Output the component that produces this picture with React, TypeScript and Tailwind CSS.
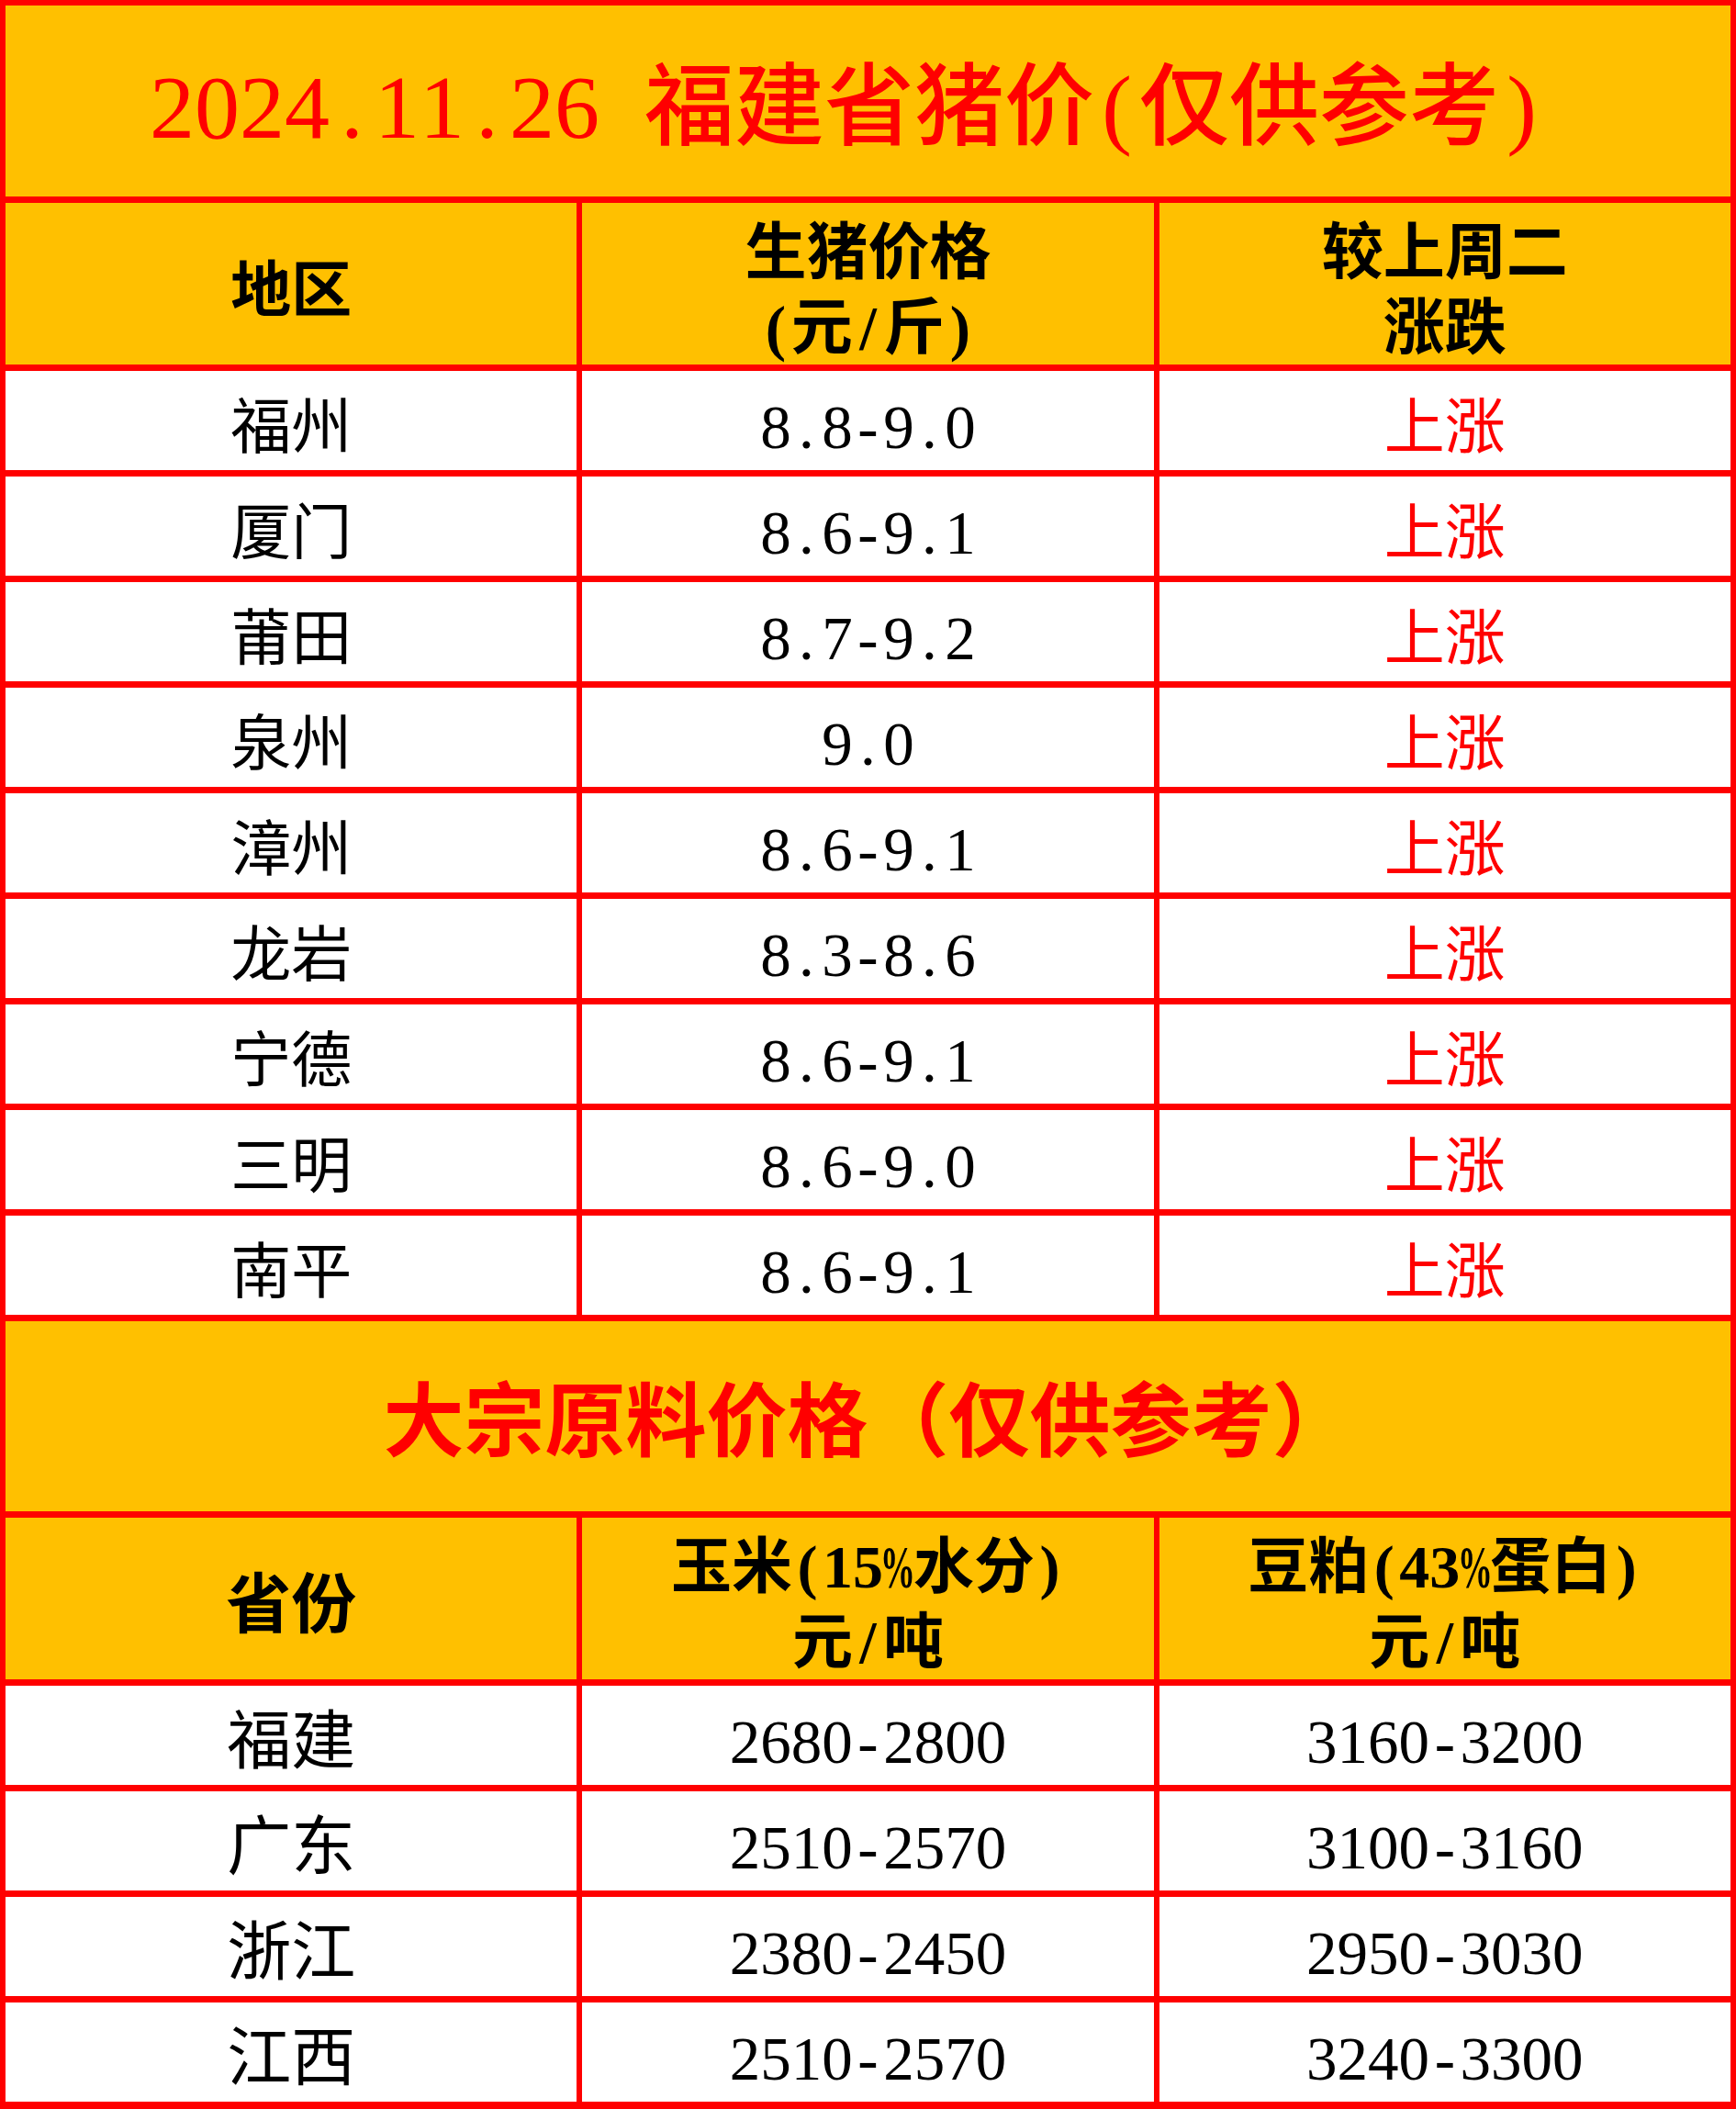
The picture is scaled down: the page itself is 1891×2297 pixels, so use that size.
const FONT = "font-['Liberation_Serif','Noto_Sans_CJK_SC',serif]";

const pigRows = [
  ["福州", "8.8-9.0"],
  ["厦门", "8.6-9.1"],
  ["莆田", "8.7-9.2"],
  ["泉州", "9.0"],
  ["漳州", "8.6-9.1"],
  ["龙岩", "8.3-8.6"],
  ["宁德", "8.6-9.1"],
  ["三明", "8.6-9.0"],
  ["南平", "8.6-9.1"],
];

const feedRows = [
  ["福建", "2680-2800", "3160-3200"],
  ["广东", "2510-2570", "3100-3160"],
  ["浙江", "2380-2450", "2950-3030"],
  ["江西", "2510-2570", "3240-3300"],
];

// half-width for ascii, full-width for CJK, like the sheet's SimSun
function Fixed({ text, latin = "" }: { text: string; latin?: string }) {
  return (
    <span className="whitespace-nowrap">
      {Array.from(text).map((ch, i) => {
        const ascii = ch.charCodeAt(0) < 128;
        if (ch === "%")
          return (
            <span key={i} className={`inline-flex justify-center w-[0.5em] ${latin}`}>
              <span className="inline-block shrink-0 scale-x-[0.58]">%</span>
            </span>
          );
        return (
          <span
            key={i}
            className={
              ascii
                ? `inline-block w-[0.5em] text-center ${latin}`
                : "inline-block w-[1em] text-center"
            }
          >
            {ch === " " ? "\u00a0" : ch}
          </span>
        );
      })}
    </span>
  );
}

function Cell({
  children,
  className = "",
}: {
  children: React.ReactNode;
  className?: string;
}) {
  return (
    <div
      className={`flex flex-col items-center justify-center text-center pt-[14px] ${className}`}
    >
      {children}
    </div>
  );
}

export default function App() {
  return (
    <div
      className={`w-[1891px] h-[2297px] bg-[#ff0000] pt-[6px] pb-[8px] px-[6px] grid grid-cols-3 gap-x-[6px] gap-y-[7px] grid-rows-[208px_176px_repeat(9,108px)_207px_176px_repeat(4,108px)] text-black ${FONT}`}
    >
      {/* title */}
      <Cell className="col-span-3 bg-[#ffc000] text-[#ff0000] text-[98px] font-medium pr-[46px]">
        <Fixed text="2024.11.26 福建省猪价(仅供参考)" latin="font-normal" />
      </Cell>

      {/* header */}
      <Cell className="bg-[#ffc000] text-[66px] font-bold">
        <Fixed text="地区" />
      </Cell>
      <Cell className="bg-[#ffc000] text-[67px] font-bold leading-[82px]">
        <Fixed text="生猪价格" />
        <Fixed text="(元/斤)" />
      </Cell>
      <Cell className="bg-[#ffc000] text-[67px] font-bold leading-[82px]">
        <Fixed text="较上周二" />
        <Fixed text="涨跌" />
      </Cell>

      {pigRows.map(([area, price]) => (
        <div key={area} className="contents">
          <Cell className="bg-white text-[66px]">
            <Fixed text={area} />
          </Cell>
          <Cell className="bg-white text-[67px]">
            <Fixed text={price} />
          </Cell>
          <Cell className="bg-white text-[66px] text-[#ff0000]">
            <Fixed text="上涨" />
          </Cell>
        </div>
      ))}

      {/* second title */}
      <Cell className="col-span-3 bg-[#ffc000] text-[#ff0000] text-[88px] font-bold">
        <Fixed text="大宗原料价格（仅供参考）" />
      </Cell>

      <Cell className="bg-[#ffc000] text-[71px] font-bold">
        <Fixed text="省份" />
      </Cell>
      <Cell className="bg-[#ffc000] text-[66px] font-bold leading-[82px]">
        <Fixed text="玉米(15%水分)" />
        <Fixed text="元/吨" />
      </Cell>
      <Cell className="bg-[#ffc000] text-[66px] font-bold leading-[82px]">
        <Fixed text="豆粕(43%蛋白)" />
        <Fixed text="元/吨" />
      </Cell>

      {feedRows.map(([prov, corn, soy]) => (
        <div key={prov} className="contents">
          <Cell className="bg-white text-[70px]">
            <Fixed text={prov} />
          </Cell>
          <Cell className="bg-white text-[67px]">
            <Fixed text={corn} />
          </Cell>
          <Cell className="bg-white text-[67px]">
            <Fixed text={soy} />
          </Cell>
        </div>
      ))}
    </div>
  );
}
